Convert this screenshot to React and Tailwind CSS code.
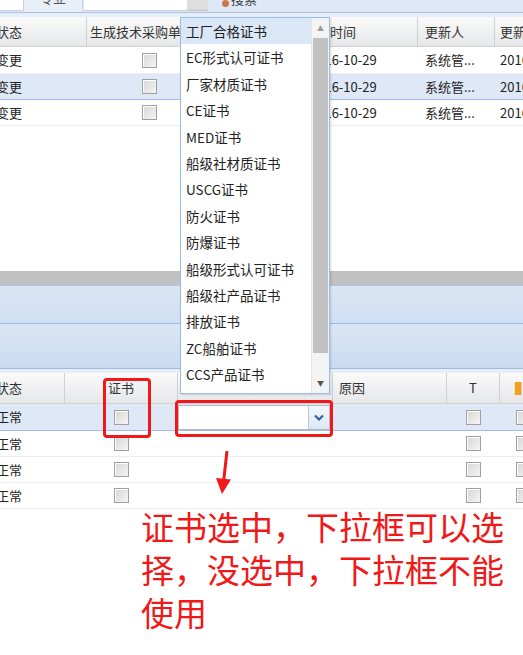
import React from "react";

const font = { fontFamily: '"Noto Sans CJK SC", "Liberation Sans", sans-serif' };

const certs = [
  "工厂合格证书",
  "EC形式认可证书",
  "厂家材质证书",
  "CE证书",
  "MED证书",
  "船级社材质证书",
  "USCG证书",
  "防火证书",
  "防爆证书",
  "船级形式认可证书",
  "船级社产品证书",
  "排放证书",
  "ZC船舶证书",
  "CCS产品证书",
];

const topRows = [false, true, false];
const bottomRows = [true, false, false, false];

const Cb = () => (
  <span className="block w-[15px] h-[15px] border border-[#a0a0a0] bg-linear-to-br from-[#d6d6d6] to-[#f5f5f5] shadow-[inset_1px_1px_0_#fff]" />
);

const Hd = ({ w, children, className = "" }) => (
  <div
    className={`h-full shrink-0 flex items-center border-r border-[#d0d0d0] overflow-hidden whitespace-nowrap ${className}`}
    style={{ width: w }}
  >
    {children}
  </div>
);

const Cell = ({ w, children, className = "" }) => (
  <div
    className={`h-full shrink-0 flex items-center overflow-hidden whitespace-nowrap ${className}`}
    style={{ width: w }}
  >
    {children}
  </div>
);

const Dropdown = () => (
  <div className="absolute left-[180px] top-[17px] w-[150px] h-[377px] bg-white border border-[#99bbe8] flex shadow-[1px_1px_2px_rgba(0,0,0,0.15)]">
    <div className="flex-1 flex flex-col">
      {certs.map((c, i) => (
        <div
          key={c}
          className={`h-[26.4px] shrink-0 flex items-center pl-[5px] text-[13.5px] text-[#222] whitespace-nowrap ${i === 0 ? "bg-[#dae7f6]" : ""}`}
        >
          {c}
        </div>
      ))}
    </div>
    <div className="w-[18px] flex flex-col bg-[#f4f4f4] border-l border-[#e4e4e4]">
      <div className="h-[20px] flex items-center justify-center text-[#9a9a9a] text-[7px]">▲</div>
      <div className="mx-[1px] flex-1 bg-[#c1c1c1] mb-[20px]" />
      <div className="h-[20px] flex items-center justify-center text-[#555] text-[7px]">▼</div>
    </div>
  </div>
);

export default function App() {
  return (
    <div className="relative w-[523px] h-[655px] overflow-hidden bg-white text-[#222]" style={font}>
      {/* toolbar */}
      <div className="h-[13px] bg-[#dfe8f6] border-b border-[#a9c3e6] flex items-start overflow-hidden">
        <div className="w-[24px] h-[11px] bg-white border-r border-b border-[#c7cedb]" />
        <div className="w-[59px] h-[12px] bg-[#e8eff8] border-r border-[#c8d6ea] flex justify-center overflow-hidden">
          <span className="text-[13px] leading-none -mt-[9px] text-[#555]">专业</span>
        </div>
        <div className="ml-[1px] w-[103px] h-[11px] bg-white border-b border-[#c7cedb]" />
        <div className="w-[21px] h-[11px] bg-[#dedede] border-b border-[#c0c0c0]" />
        <div className="ml-[14px] flex items-start overflow-hidden h-[12px]">
          <span className="block w-[7px] h-[7px] rounded-full bg-[#c9784a]" />
          <span className="text-[13px] leading-none -mt-[8px] ml-[2px] text-[#444]">搜索</span>
        </div>
      </div>
      <div className="h-[4px] bg-[#e8eef7]" />

      {/* top grid */}
      <div className="h-[30px] flex bg-linear-to-b from-[#fafafa] to-[#e6e7e9] border-b border-[#d0d0d0] text-[13px] text-[#333]">
        <Hd w={87}><span className="-ml-[4px]">状态</span></Hd>
        <Hd w={125} className="pl-[3px]">生成技术采购单</Hd>
        <Hd w={88} />
        <Hd w={118} className="pl-[4px]">更新时间</Hd>
        <Hd w={77} className="pl-[7px]">更新人</Hd>
        <Hd w={60} className="pl-[5px]">更新时间</Hd>
      </div>
      {topRows.map((sel, i) => (
        <div
          key={i}
          className={`flex text-[13px] border-b ${i === 0 ? "h-[27px]" : "h-[26px]"} ${sel ? "bg-[#dfe8f6] border-[#a3bae9]" : "bg-white border-[#ededed]"}`}
        >
          <Cell w={87}><span className="-ml-[4px]">变更</span></Cell>
          <Cell w={125} className="justify-center"><Cb /></Cell>
          <Cell w={88} />
          <Cell w={118} className="pl-[10px]">2016-10-29</Cell>
          <Cell w={77} className="pl-[7px]">系统管...</Cell>
          <Cell w={60} className="pl-[5px]">2016-10-29</Cell>
        </div>
      ))}
      <div className="h-[145px] bg-white" />
      {/* horizontal scrollbar */}
      <div className="h-[15px] bg-[#c1c1c1] border-b border-[#b0c4e0]" />

      {/* panel bands */}
      <div className="h-[38px] bg-linear-to-b from-[#dbe6f4] to-[#cfdff3] border-b border-[#99bbe8]" />
      <div className="h-[45px] bg-linear-to-b from-[#dae6f4] to-[#cadbf1] border-b border-[#99bbe8]" />
      <div className="h-[4px] bg-[#e9eef5]" />

      {/* bottom grid */}
      <div className="h-[31px] flex bg-linear-to-b from-[#fafafa] to-[#e6e7e9] border-b border-[#d0d0d0] text-[13px] text-[#333]">
        <Hd w={65}><span className="-ml-[4px]">状态</span></Hd>
        <Hd w={113} className="justify-center">证书</Hd>
        <Hd w={155} />
        <Hd w={114} className="pl-[6px]">原因</Hd>
        <Hd w={53} className="justify-center">T</Hd>
        <Hd w={40} className="pl-[15px] text-[#f0a020]">▌</Hd>
      </div>
      {bottomRows.map((sel, i) => (
        <div
          key={i}
          className={`flex text-[13px] border-b ${i === 0 ? "h-[27px]" : "h-[26px]"} ${sel ? "bg-[#dfe8f6] border-[#a3bae9]" : "bg-white border-[#ededed]"}`}
        >
          <Cell w={65}><span className="-ml-[4px]">正常</span></Cell>
          <Cell w={113} className="justify-center"><Cb /></Cell>
          <Cell w={155} className="items-end">
            {sel && (
              <div className="h-[25px] w-[152px] flex bg-white border border-[#b5b8c8]">
                <div className="flex-1" />
                <div className="w-[21px] border-l border-[#b5c8e2] bg-linear-to-b from-[#f3f7fc] to-[#dce7f5] flex items-center justify-center">
                  <svg width="10" height="7" viewBox="0 0 10 7">
                    <path d="M1 1.5 L5 5.5 L9 1.5" fill="none" stroke="#2d5c9e" strokeWidth="2" />
                  </svg>
                </div>
              </div>
            )}
          </Cell>
          <Cell w={114} />
          <Cell w={53} className="justify-center"><Cb /></Cell>
          <Cell w={40} className="pl-[16px]"><Cb /></Cell>
        </div>
      ))}

      {/* annotation text */}
      <div className="pl-[141px] -mt-[4px] text-[33px] leading-[43px] text-[#f01818] w-[523px]">
        证书选中，下拉框可以选择，没选中，下拉框不能使用
      </div>

      <Dropdown />

      {/* red annotation boxes */}
      <div className="absolute left-[103px] top-[378px] w-[48px] h-[60px] border-[3px] border-[#f01818] rounded-[4px]" />
      <div className="absolute left-[175px] top-[400px] w-[158px] h-[37px] border-[3px] border-[#f01818] rounded-[4px]" />
      <svg className="absolute left-[212px] top-[448px]" width="24" height="48" viewBox="0 0 24 48">
        <path d="M15 3 L11.5 34" stroke="#f01818" strokeWidth="3" fill="none" />
        <path d="M4 30 L19 31.5 L10 46 Z" fill="#f01818" />
      </svg>
    </div>
  );
}
